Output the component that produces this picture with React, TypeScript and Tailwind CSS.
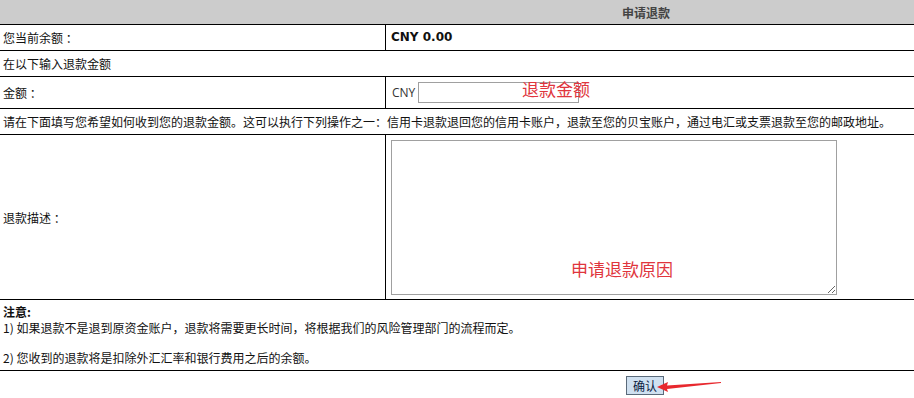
export default function App() {
  return (
    <div className="relative w-[914px] h-[398px] bg-white text-[12px] leading-[15px] text-[#111] font-['Noto_Sans_CJK_SC','Noto_Sans',sans-serif]">
      {/* header */}
      <div className="flex h-[25px] border-b border-black bg-[#cccccc]">
        <div className="w-[386px]" />
        <div className="flex-1 flex items-center justify-center pr-[8px] font-bold text-[#444]">申请退款</div>
      </div>

      <div className="flex h-[26px] border-b border-black">
        <div className="w-[386px] border-r border-black flex items-center pl-[3px]">您当前余额 ：</div>
        <div className="flex-1 flex items-center pl-[5px] font-bold font-['DejaVu_Sans',sans-serif] text-[12px]">CNY 0.00</div>
      </div>

      <div className="flex h-[26px] border-b border-black items-center pl-[3px]">在以下输入退款金额</div>

      <div className="flex h-[32px] border-b border-black">
        <div className="w-[386px] border-r border-black flex items-center pl-[3px]">金额 ：</div>
        <div className="relative flex-1 flex items-center pl-[6px] gap-[3px]">
          <span className="text-[#333] font-['Open_Sans',sans-serif]">CNY</span>
          <input className="w-[161px] h-[21px] border border-[#a0a0a0] outline-none" />
          <span className="absolute left-[136px] top-[2px] text-[17px] leading-[20px] text-[#e0353d]">退款金额</span>
        </div>
      </div>

      <div className="flex h-[26px] border-b border-black items-center pl-[3px]">
        请在下面填写您希望如何收到您的退款金额。这可以执行下列操作之一：信用卡退款退回您的信用卡账户，退款至您的贝宝账户，通过电汇或支票退款至您的邮政地址。
      </div>

      <div className="flex h-[165px] border-b border-black">
        <div className="w-[386px] border-r border-black flex items-center pl-[3px]">退款描述 ：</div>
        <div className="relative flex-1 pl-[5px] pt-[5px]">
          <textarea className="block w-[446px] h-[155px] border border-[#a0a0a0] outline-none resize" />
          <span className="absolute left-[185px] top-[124px] text-[17px] leading-[20px] text-[#e0353d]">申请退款原因</span>
        </div>
      </div>

      <div className="flex flex-col h-[71px] border-b border-black pl-[3px] pt-[4px]">
        <div className="font-bold leading-[16px]">注意:</div>
        <div className="leading-[16px]">1) 如果退款不是退到原资金账户，退款将需要更长时间，将根据我们的风险管理部门的流程而定。</div>
        <div className="h-[14px]" />
        <div className="leading-[16px]">2) 您收到的退款将是扣除外汇汇率和银行费用之后的余额。</div>
      </div>

      <div className="relative flex pl-[626px] pt-[5px]">
        <button className="w-[38px] h-[19px] p-0 border border-[#5a6a7a] bg-[#cfe0f0] text-[12px] leading-[15px] text-[#0a1a40]">确认</button>
        <svg className="absolute left-[655px] top-[9px]" width="70" height="14" viewBox="0 0 70 14">
          <polygon points="2,7 13,2 12,5.5 66,2 66,3 12,9 13,12" fill="#e8282e" />
        </svg>
      </div>
    </div>
  );
}
